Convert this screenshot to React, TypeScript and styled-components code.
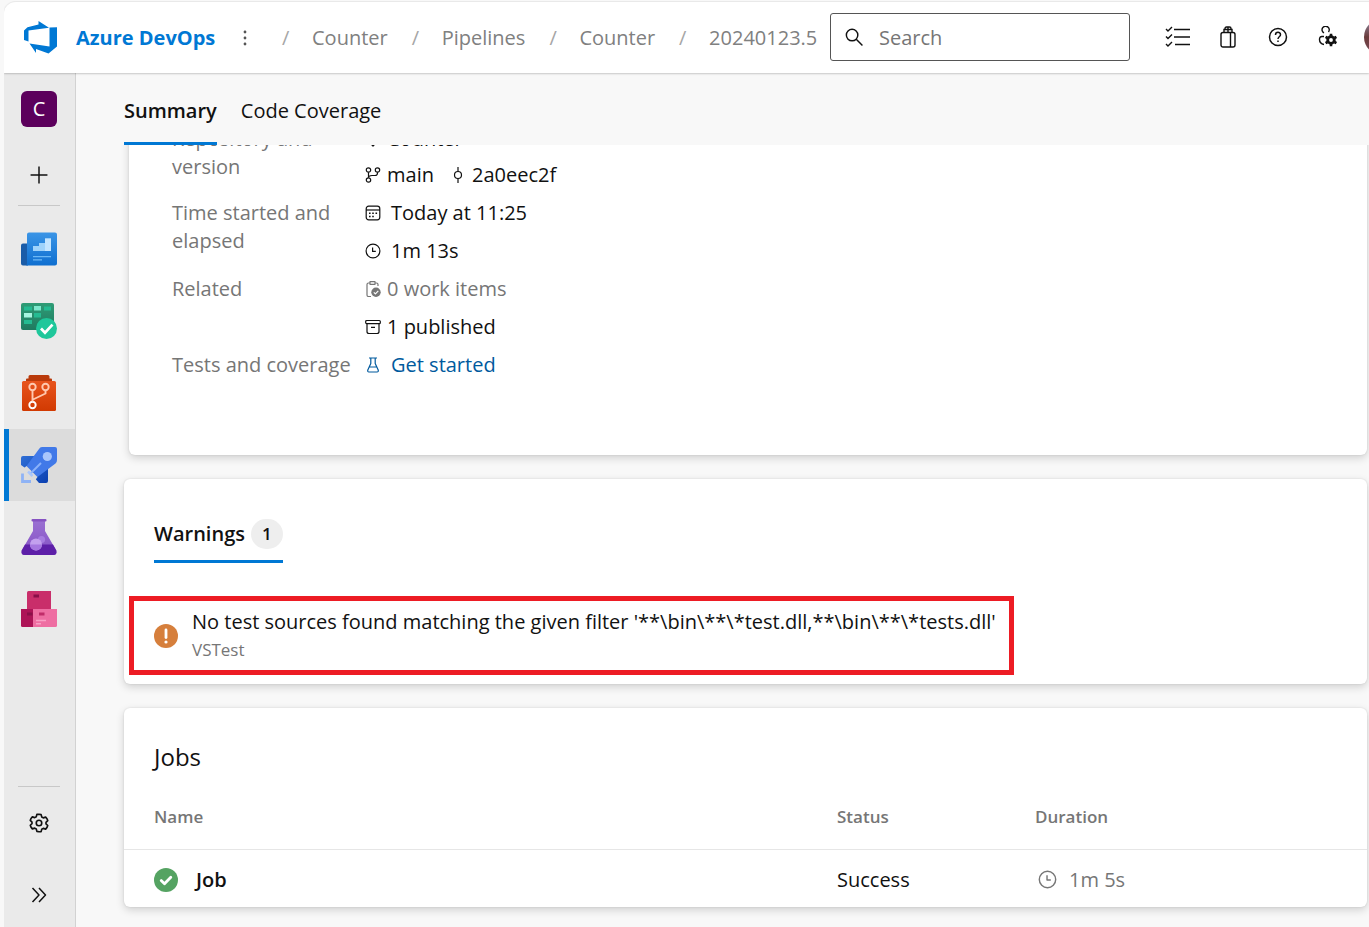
import React from "react";
import styled, { createGlobalStyle } from "styled-components";

const GlobalStyle = createGlobalStyle`
  *, *::before, *::after { box-sizing: border-box; }
  body {
    margin: 0;
    background: #f8f8f8;
    color: #111;
    font-family: "Open Sans", "Noto Sans", sans-serif;
    font-size: 20px;
    line-height: 28px;
  }
  a { color: inherit; text-decoration: none; }
  button { font: inherit; color: inherit; border: 0; padding: 0; background: none; cursor: pointer; }
  svg { display: block; flex: none; }
`;

const Page = styled.div`
  display: flex;
  flex-direction: column;
  height: 100vh;
  overflow: hidden;
  padding: 1px 0 0 4px;
`;

const TopBar = styled.header`
  display: flex;
  align-items: center;
  flex: none;
  height: 72px;
  padding: 0 0 0 20px;
  background: #fff;
  border-top: 1px solid #e9e9e9;
  border-top-left-radius: 12px;
  box-shadow: 0 1px 2px rgba(0, 0, 0, 0.2);
  z-index: 1;
  overflow: hidden;
  clip-path: inset(0 0 -4px 0);
`;

const Brand = styled.a`
  display: flex;
  align-items: center;
  gap: 19px;
  width: 192px;
  flex: none;
  color: #0078d4;
  font-weight: 700;
  white-space: nowrap;
`;

const MoreButton = styled.button`
  width: 16px;
  margin-left: 21px;
  color: #555;
  display: flex;
  justify-content: center;
`;

const Crumbs = styled.ol`
  display: flex;
  margin: 0;
  padding: 0 0 0 29px;
  list-style: none;
  color: #808080;
  white-space: nowrap;
`;

const Crumb = styled.li`
  display: flex;
  & + & { margin-left: 24px; }
  &::before {
    content: "/";
    width: 10px;
    margin-right: 20px;
    color: #a6a6a6;
  }
`;

const SearchBox = styled.label`
  display: flex;
  align-items: center;
  gap: 16px;
  flex: none;
  width: 300px;
  height: 48px;
  margin: 0 0 2px auto;
  padding: 0 14px;
  border: 1px solid #555;
  border-radius: 3px;
`;

const SearchInput = styled.input`
  flex: 1;
  min-width: 0;
  border: 0;
  outline: 0;
  padding: 2px 0 0;
  font: inherit;
  background: none;
  &::placeholder { color: #767676; opacity: 1; }
`;

const Tools = styled.div`
  display: flex;
  flex: none;
  align-items: center;
  gap: 22px;
  width: 239px;
  padding: 0 0 2px 34px;
`;

const ToolButton = styled.button`
  display: flex;
  justify-content: center;
  flex: none;
  width: 28px;
`;

const Avatar = styled.span`
  flex: none;
  width: 36px;
  height: 36px;
  border-radius: 50%;
  background: linear-gradient(#8d8ba5, #6b3b3b 50%, #7a4b58);
`;

const Body = styled.div`
  display: flex;
  flex: 1;
  min-height: 0;
`;

const Sidebar = styled.nav`
  display: flex;
  flex-direction: column;
  flex: none;
  width: 72px;
  background: #eaeaea;
  border-right: 1px solid #d2d2d2;
`;

const SideItem = styled.button<{ $active?: boolean; $short?: boolean }>`
  display: flex;
  align-items: center;
  justify-content: center;
  flex: none;
  height: ${(p) => (p.$short ? 60 : 72)}px;
  padding-right: ${(p) => (p.$active ? 6 : 1)}px;
  border-left: ${(p) => (p.$active ? "5px solid #0078d4" : "0")};
  background: ${(p) => (p.$active ? "#dcdcdc" : "transparent")};
`;

const Rule = styled.hr`
  flex: none;
  width: 42px;
  height: 1px;
  margin: 0 14px 7px;
  border: 0;
  background: #c8c8c8;
`;

const SideBottom = styled.div`
  display: flex;
  flex-direction: column;
  margin: auto 0 -4px;
  ${Rule} { margin-bottom: 0; }
`;

const ProjectTile = styled.span`
  width: 36px;
  height: 36px;
  border-radius: 6px;
  background: #5c005c;
  color: #fff;
  line-height: 36px;
  text-align: center;
`;

const Main = styled.main`
  display: flex;
  flex-direction: column;
  flex: 1;
  min-width: 0;
`;

const TabBar = styled.div`
  display: flex;
  flex: none;
  gap: 24px;
  height: 72px;
  padding-left: 48px;
  background: #f8f8f8;
`;

const Tab = styled.button<{ $active?: boolean }>`
  padding-top: 6px;
  border-bottom: 3px solid ${(p) => (p.$active ? "#0078d4" : "transparent")};
  font-weight: ${(p) => (p.$active ? 600 : 400)};
`;

const Scroller = styled.div`
  display: flex;
  flex-direction: column;
  gap: 24px;
  flex: 1;
  min-height: 0;
  overflow: hidden;
  padding: 0 2px 20px 48px;
`;

const Card = styled.section`
  flex: none;
  background: #fff;
  border-radius: 6px;
  box-shadow: 0 3px 8px rgba(0, 0, 0, 0.16), 0 0 2px rgba(0, 0, 0, 0.12);
`;

const DetailsCard = styled(Card)`
  margin: -44px 0 0 5px;
  padding: 24px 43px 76px;
`;

const Details = styled.dl`
  display: grid;
  grid-template-columns: 193px 1fr;
  row-gap: 10px;
  margin: 0;
`;

const Term = styled.dt`
  color: #767676;
  padding-right: 8px;
`;

const Values = styled.dd<{ $gap?: number }>`
  display: flex;
  flex-direction: column;
  gap: ${(p) => p.$gap ?? 10}px;
  margin: 0;
`;

const Value = styled.span<{ $tone?: string; $wide?: boolean }>`
  display: flex;
  align-items: center;
  gap: ${(p) => (p.$wide ? 10 : 6)}px;
  color: ${(p) => p.$tone ?? "#111"};
  white-space: nowrap;
`;

const Pair = styled.span`
  display: flex;
  gap: 16px;
`;

const WarningsCard = styled(Card)`
  padding: 30px 5px 9px;
`;

const WarningsTab = styled.button`
  display: flex;
  align-items: center;
  gap: 6px;
  height: 54px;
  margin-left: 25px;
  padding-bottom: 2px;
  border-bottom: 3px solid #0078d4;
  font-weight: 600;
`;

const Count = styled.span`
  width: 32px;
  height: 30px;
  border-radius: 15px;
  background: #eee;
  font-size: 17px;
  line-height: 30px;
`;

const Alert = styled.div`
  display: flex;
  align-items: center;
  gap: 14px;
  width: 885px;
  max-width: 100%;
  height: 79px;
  margin-top: 33px;
  padding: 0 20px;
  border: 5px solid #ed1c24;
  white-space: nowrap;
`;

const AlertSource = styled.div`
  color: #767676;
  font-size: 17px;
`;

const JobsCard = styled(Card)`
  padding-top: 32px;
`;

const JobsTitle = styled.h2`
  margin: 0 30px;
  font-size: 24px;
  font-weight: 400;
  line-height: 34px;
`;

const JobsTable = styled.table`
  width: 100%;
  border-collapse: separate;
  border-spacing: 0;
  table-layout: fixed;
  text-align: left;
`;

const HeadCell = styled.th<{ $width?: string }>`
  width: ${(p) => p.$width ?? "auto"};
  height: 76px;
  padding: 10px 0 0;
  border-bottom: 1px solid #e6e6e6;
  color: #767676;
  font-size: 17px;
  font-weight: 600;
  &:first-child { padding-left: 30px; }
`;

const Cell = styled.td`
  height: 57px;
  padding: 2px 0 0;
  &:first-child { padding-left: 30px; }
`;

const CellLine = styled.span<{ $gap: number; $muted?: boolean }>`
  display: flex;
  align-items: center;
  gap: ${(p) => p.$gap}px;
  padding-left: ${(p) => (p.$muted ? 3 : 0)}px;
  color: ${(p) => (p.$muted ? "#767676" : "#111")};
  font-weight: ${(p) => (p.$muted ? 400 : 600)};
`;

type IconProps = { size?: number; children: React.ReactNode; box?: string; w?: number };

const Line = ({ size = 16, children, box = "0 0 16 16", w = 1.2 }: IconProps) => (
  <svg width={size} height={size} viewBox={box} fill="none" stroke="currentColor" strokeWidth={w} strokeLinejoin="round" aria-hidden="true">
    {children}
  </svg>
);

const Logo = () => (
  <svg width="33" height="33" viewBox="0 0 33 33" fill="#0078d4" aria-hidden="true">
    <path d="M0 9.500L3.500 6.200 14.500 3.500V0L25 6.800 4.500 9.500V20.500L0 19z" />
    <path d="M33 6.300V25.500L24.500 32.500 12 28V32L5.500 22.500 25.500 25.500V6.500z" />
  </svg>
);

const Clock = ({ size = 16 }: { size?: number }) => (
  <Line size={size}>
    <circle cx="8" cy="8" r="6.9" />
    <path d="M7.6 4.5V8.4H10.8" />
  </Line>
);

const OverviewIcon = () => (
  <svg width="36" height="36" viewBox="0 0 36 36" aria-hidden="true">
    <defs>
      <linearGradient id="ov" x1="0" y1="0" x2="0" y2="1">
        <stop offset="0" stopColor="#3b95e6" />
        <stop offset="1" stopColor="#0f6fd0" />
      </linearGradient>
    </defs>
    <path d="M0 14.5a2 2 0 0 1 2-2h5V34.500H2a2 2 0 0 1-2-2z" fill="#1a5ca8" />
    <path d="M6 3.500a2 2 0 0 1 2-2H34a2 2 0 0 1 2 2V32.500a2 2 0 0 1-2 2H4.500c1 0 1.500-1 1.500-2z" fill="url(#ov)" />
    <path d="M12 15h6v-3h6V7.500h6V20H12z" fill="#9fd3fb" />
    <path d="M24 7.500h6V20h-6z" fill="#c4e5ff" />
    <path d="M12 25.700h18M12 28.900h9" stroke="#6cb8f5" strokeWidth="1.300" />
  </svg>
);

const BoardsIcon = () => (
  <svg width="36" height="36" viewBox="0 0 36 36" aria-hidden="true">
    <defs>
      <linearGradient id="bd" x1="0" y1="0" x2="0" y2="1">
        <stop offset="0" stopColor="#2f9c76" />
        <stop offset="1" stopColor="#1f7a60" />
      </linearGradient>
    </defs>
    <path d="M0 2a2 2 0 0 1 2-2H31a2 2 0 0 1 2 2V27H2a2 2 0 0 1-2-2z" fill="url(#bd)" />
    <path d="M3 3.500h8v4H3zM23 3.500h7v4h-7zM13 10h7v4.500h-7zM3 17h8v4H3z" fill="#25bb92" />
    <path d="M13 3h7v4.500h-7z" fill="#7de8cd" />
    <path d="M3 10h8v4.500H3z" fill="#a6f5e0" />
    <circle cx="25.500" cy="25.500" r="10.500" fill="#1fc79b" />
    <path d="M20 25.500l4 4.200 7.500-8" stroke="#fff" strokeWidth="2.700" fill="none" />
  </svg>
);

const ReposIcon = () => (
  <svg width="36" height="36" viewBox="0 0 36 36" aria-hidden="true">
    <defs>
      <linearGradient id="rp" x1="0" y1="0" x2="0" y2="1">
        <stop offset="0" stopColor="#e8541d" />
        <stop offset="1" stopColor="#d13a02" />
      </linearGradient>
    </defs>
    <path d="M5 7V4.500q0-1 1-1h1.500V1.500Q7.500 0 9 0H27q1.500 0 1.500 1.500v2H30q1 0 1 1V7z" fill="#b93a0b" />
    <rect x="1" y="6" width="34" height="30" rx="1.500" fill="url(#rp)" />
    <g fill="none" stroke="#ffc9b0" strokeWidth="1.900">
      <circle cx="11.500" cy="12" r="3.200" />
      <circle cx="24.500" cy="12" r="3.200" />
      <circle cx="11.500" cy="30" r="3.200" stroke="#fff" />
      <path d="M11.500 15.300V26.600M24.500 15.300V18.500L12 24.500" />
    </g>
  </svg>
);

const PipelinesIcon = () => (
  <svg width="36" height="36" viewBox="0 0 36 36" aria-hidden="true">
    <defs>
      <linearGradient id="pp" x1="0" y1="0" x2="1" y2="1">
        <stop offset="0" stopColor="#2f6fd6" />
        <stop offset="1" stopColor="#0a3fb0" />
      </linearGradient>
    </defs>
    <path d="M2 9H27V34q0 2-2 2H18L12 29l-5-6L0 18V11q0-2 2-2z" fill="url(#pp)" />
    <path d="M21 0H34q2 0 2 2V13q0 2-1.500 3.500L16.500 30 5.500 19 18 2q1-2 3-2z" fill="#4179e8" />
    <path d="M5.500 19L2 22l12 11.500L16.500 30z" fill="#dcdcdc" />
    <circle cx="26.300" cy="9.500" r="4.600" fill="#a9c6fb" />
    <path d="M20 16L9.500 26.500" stroke="#8ab2fa" strokeWidth="2" />
    <path d="M7 24.500l4.500 4.500" stroke="#a9c6fb" strokeWidth="2.500" />
    <path d="M1.500 26.500V34.500H10" stroke="#8fb3f5" strokeWidth="2.800" fill="none" />
  </svg>
);

const TestIcon = () => (
  <svg width="36" height="36" viewBox="0 0 36 36" aria-hidden="true">
    <defs>
      <linearGradient id="ts" x1="0" y1="0" x2="0" y2="1">
        <stop offset="0" stopColor="#9a70d2" />
        <stop offset="1" stopColor="#8450c5" />
      </linearGradient>
    </defs>
    <path d="M12 2h12v10l11 19q2 5-3 5H4q-5 0-3-5l11-19z" fill="url(#ts)" />
    <path d="M4 25.500H32l3.300 6Q36 36 32 36H4Q0 36 .7 31.500z" fill="#5d1fa8" />
    <rect x="10.500" y="0" width="15" height="2.600" rx="1" fill="#8652c2" />
    <circle cx="20.500" cy="20.500" r="3.600" fill="#a67ce0" />
    <circle cx="15" cy="25.500" r="6" fill="#c3a0ee" />
    <path d="M9 25.500h12a6 6 0 0 1-12 0z" fill="#a677e0" />
  </svg>
);

const ArtifactsIcon = () => (
  <svg width="36" height="36" viewBox="0 0 36 36" aria-hidden="true">
    <path d="M7.500 0H30V18H6V1.500Q6 0 7.500 0z" fill="#c92e6a" />
    <path d="M0 18H12.500V36H1.500Q0 36 0 34.500z" fill="#ad1457" />
    <path d="M12 18H36V34.500Q36 36 34.500 36H12z" fill="#ee6ea2" />
    <path d="M12.500 3.500h5.500v3h-5.500zM6 21.500h5.500v3H6z" fill="#8a0f48" />
    <path d="M18 21.500h5.500v3H18z" fill="#c12c69" />
    <path d="M15 29.500h10M15 32.700h5" stroke="#f9a0c5" strokeWidth="1.400" />
  </svg>
);

const services = [
  { name: "Overview", Icon: OverviewIcon },
  { name: "Boards", Icon: BoardsIcon },
  { name: "Repos", Icon: ReposIcon },
  { name: "Pipelines", Icon: PipelinesIcon },
  { name: "Test Plans", Icon: TestIcon },
  { name: "Artifacts", Icon: ArtifactsIcon },
];

const crumbs = ["Counter", "Pipelines", "Counter", "20240123.5"];

const gearPath =
  "M8 1l1.700 .3 .5 1.900 1.200 .7 1.900-.6 1.100 1.300 .6 1.500-1.400 1.400v1.200l1.400 1.300-.6 1.500-1.100 1.400-1.900-.6-1.200 .7-.5 1.900L8 15l-1.700-.3-.5-1.900-1.200-.7-1.900 .6-1.100-1.400L1 9.800l1.400-1.300V7.300L1 5.900l.6-1.500 1.100-1.300 1.900 .6 1.200-.7 .5-1.900z";

export default function App() {
  return (
    <>
      <GlobalStyle />
      <Page>
        <TopBar>
          <Brand href="#home">
            <Logo />
            Azure DevOps
          </Brand>
          <MoreButton aria-label="More">
            <svg width="4" height="16" viewBox="0 0 4 16" fill="currentColor" aria-hidden="true">
              <circle cx="2" cy="2" r="1.400" />
              <circle cx="2" cy="8" r="1.400" />
              <circle cx="2" cy="14" r="1.400" />
            </svg>
          </MoreButton>
          <Crumbs>
            {crumbs.map((c, i) => (
              <Crumb key={i}>
                <a href="#crumb">{c}</a>
              </Crumb>
            ))}
          </Crumbs>
          <SearchBox>
            <Line size={18} w={1.3}>
              <circle cx="6.300" cy="6.300" r="5.100" />
              <path d="M10 10l5.500 5.500" />
            </Line>
            <SearchInput type="text" placeholder="Search" aria-label="Search" />
          </SearchBox>
          <Tools>
            <ToolButton aria-label="Work items">
              <svg width="26" height="22" viewBox="0 0 26 22" fill="none" stroke="currentColor" strokeWidth="1.400" aria-hidden="true">
                <path d="M9 3.500H25M9 11H25M10 18.500H25" />
                <path d="M1 3l2 2L7 1M1 10.500l2 2 4-4M1 18l2 2 4-4" />
              </svg>
            </ToolButton>
            <ToolButton aria-label="Marketplace">
              <svg width="16" height="22" viewBox="0 0 16 22" fill="none" stroke="currentColor" strokeWidth="1.400" aria-hidden="true">
                <rect x="1" y="6.500" width="14" height="14.500" rx="2" />
                <path d="M4 6.500V3.500H12V6.500M5 3.500V2.500Q5 1 6.500 1H9.500Q11 1 11 2.500V3.500M8 1V6.500M10.500 6.500V21" />
              </svg>
            </ToolButton>
            <ToolButton aria-label="Help">
              <Line size={20} box="0 0 20 20" w={1.5}>
                <circle cx="10" cy="10" r="8.500" />
                <path d="M7.500 8c0-3.600 5-3.400 5-.3 0 2-2.500 2.200-2.500 4.300M10 13.400v1.600" />
              </Line>
            </ToolButton>
            <ToolButton aria-label="User settings">
              <svg width="20" height="21" viewBox="0 0 20 21" fill="none" stroke="currentColor" strokeWidth="1.400" aria-hidden="true">
                <path d="M6 7A3.600 3.600 0 1 1 10.500 6M6 10.500H4Q1.500 10.500 1.500 13.500 1.500 17.500 6 18.500" />
                <circle cx="13" cy="14" r="3.300" strokeWidth="2.800" />
                <path d="M13 7.800V10M13 18V20.200M7.600 10.900L9.500 12M16.500 16l1.900 1.100M18.400 10.900L16.500 12M9.500 16l-1.900 1.100" strokeWidth="2.600" />
              </svg>
            </ToolButton>
            <Avatar />
          </Tools>
        </TopBar>
        <Body>
          <Sidebar aria-label="Project">
            <SideItem aria-label="Counter project">
              <ProjectTile>C</ProjectTile>
            </SideItem>
            <SideItem $short aria-label="Add">
              <Line size={18} w={1.3}>
                <path d="M8 .5V15.500M.5 8H15.500" />
              </Line>
            </SideItem>
            <Rule />
            {services.map(({ name, Icon }) => (
              <SideItem key={name} $active={name === "Pipelines"} aria-label={name}>
                <Icon />
              </SideItem>
            ))}
            <SideBottom>
              <Rule />
              <SideItem aria-label="Project settings">
                <Line size={20} w={1.3}>
                  <path d={gearPath} />
                  <circle cx="8" cy="8" r="2.200" />
                </Line>
              </SideItem>
              <SideItem aria-label="Expand">
                <Line w={1.5}>
                  <path d="M1.500 1l6.500 7-6.500 7M8 1l6.500 7L8 15" />
                </Line>
              </SideItem>
            </SideBottom>
          </Sidebar>
          <Main>
            <TabBar>
              <Tab $active>Summary</Tab>
              <Tab>Code Coverage</Tab>
            </TabBar>
            <Scroller>
              <DetailsCard>
                <Details>
                  <Term>Repository and version</Term>
                  <Values $gap={8}>
                    <Value>
                      <Line><path d="M8 1l7 7-7 7-7-7z" /></Line>
                      Counter
                    </Value>
                    <Pair>
                      <Value>
                        <Line>
                          <circle cx="3.500" cy="3" r="2.200" />
                          <circle cx="12.500" cy="3" r="2.200" />
                          <circle cx="3.500" cy="13" r="2.200" />
                          <path d="M3.500 5.200V10.800M12.500 5.200V6Q12.500 8.500 10 8.500H7Q3.500 8.500 3.500 10.800" />
                        </Line>
                        main
                      </Value>
                      <Value>
                        <Line>
                          <circle cx="8" cy="8" r="3.500" />
                          <path d="M8 0V4.500M8 11.500V16" />
                        </Line>
                        2a0eec2f
                      </Value>
                    </Pair>
                  </Values>
                  <Term>Time started and elapsed</Term>
                  <Values>
                    <Value $wide>
                      <Line>
                        <rect x="1.200" y="1.200" width="13.600" height="13.600" rx="2.500" />
                        <path d="M1 5H15" />
                        <path d="M4 8.300h1.600M7.200 8.300h1.600M10.500 8.300h1.600M4 11.500h1.600M7.200 11.500h1.600" strokeWidth="1.600" />
                      </Line>
                      Today at 11:25
                    </Value>
                    <Value $wide>
                      <Clock />
                      1m 13s
                    </Value>
                  </Values>
                  <Term>Related</Term>
                  <Values>
                    <Value $tone="#767676">
                      <Line>
                        <path d="M6 15.500H3.500Q2 15.500 2 14V3.500Q2 2 3.500 2H5M10 2h1.500Q13 2 13 3.500V5M5 .7H10V3.300H5z" />
                        <circle cx="11" cy="11.300" r="4.700" fill="currentColor" stroke="none" />
                        <path d="M8.800 11.300l1.600 1.600 2.900-3" stroke="#fff" />
                      </Line>
                      0 work items
                    </Value>
                    <Value>
                      <Line>
                        <rect x=".7" y="1.500" width="14.600" height="3.200" rx="1" />
                        <path d="M2 4.700V12.500Q2 14.500 4 14.500H12Q14 14.500 14 12.500V4.700M6 8.300H10" />
                      </Line>
                      1 published
                    </Value>
                  </Values>
                  <Term>Tests and coverage</Term>
                  <Values>
                    <Value $wide $tone="#005a9e">
                      <Line>
                        <path d="M4 1H12M5.800 1V6.500L2.800 13Q2.300 15 4 15H12Q13.700 15 13.200 13L10.200 6.500V1M4.500 10H11.500" />
                      </Line>
                      <a href="#tests">Get started</a>
                    </Value>
                  </Values>
                </Details>
              </DetailsCard>
              <WarningsCard>
                <WarningsTab>
                  Warnings
                  <Count>1</Count>
                </WarningsTab>
                <Alert role="alert">
                  <svg width="24" height="24" viewBox="0 0 24 24" aria-hidden="true">
                    <circle cx="12" cy="12" r="12" fill="#d67f3c" />
                    <path d="M12 6V13.500" stroke="#fff" strokeWidth="2.800" strokeLinecap="round" />
                    <circle cx="12" cy="18" r="1.600" fill="#fff" />
                  </svg>
                  <div>
                    <div>{"No test sources found matching the given filter '**\\bin\\**\\*test.dll,**\\bin\\**\\*tests.dll'"}</div>
                    <AlertSource>VSTest</AlertSource>
                  </div>
                </Alert>
              </WarningsCard>
              <JobsCard>
                <JobsTitle>Jobs</JobsTitle>
                <JobsTable>
                  <thead>
                    <tr>
                      <HeadCell scope="col">Name</HeadCell>
                      <HeadCell scope="col" $width="198px">Status</HeadCell>
                      <HeadCell scope="col" $width="332px">Duration</HeadCell>
                    </tr>
                  </thead>
                  <tbody>
                    <tr>
                      <Cell>
                        <CellLine $gap={18}>
                          <svg width="24" height="24" viewBox="0 0 24 24" aria-hidden="true">
                            <circle cx="12" cy="12" r="12" fill="#55a362" />
                            <path d="M7.200 12.600l3.300 3.200 6.300-6.600" stroke="#fff" strokeWidth="2.800" strokeLinecap="round" strokeLinejoin="round" fill="none" />
                          </svg>
                          Job
                        </CellLine>
                      </Cell>
                      <Cell>Success</Cell>
                      <Cell>
                        <CellLine $gap={12} $muted>
                          <Clock size={19} />
                          1m 5s
                        </CellLine>
                      </Cell>
                    </tr>
                  </tbody>
                </JobsTable>
              </JobsCard>
            </Scroller>
          </Main>
        </Body>
      </Page>
    </>
  );
}
